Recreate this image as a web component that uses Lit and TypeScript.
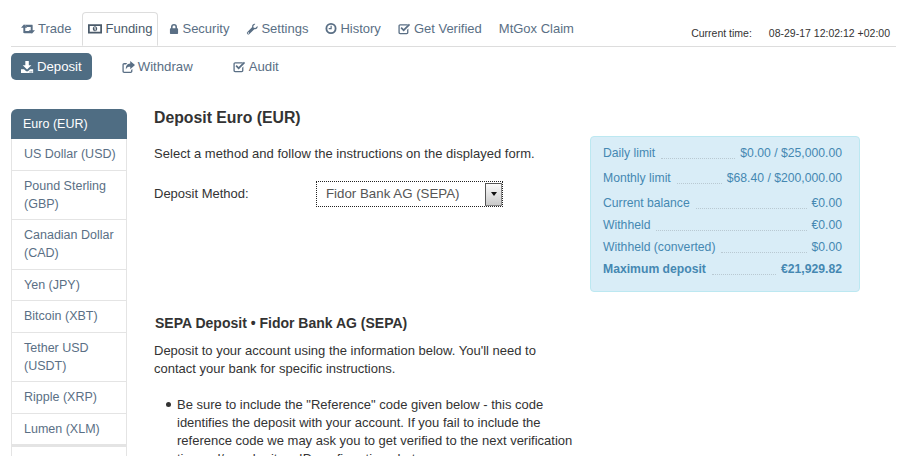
import { LitElement, html, css, svg } from 'lit';
import { customElement } from 'lit/decorators.js';

const icons: Record<string, ReturnType<typeof svg>> = {
  retweet: svg`<path d="M0 5.500L4 1l4 4.500H5.500v4H11l2.400 3H4.500C3.600 12.500 3 12 3 11V5.500H0zM5 1.500h9c.9 0 1 .5 1 1.500v5.500h3L14 13l-4-4.500h2.500v-4H7.400L5 1.500z"/>`,
  money: svg`<path fill-rule="evenodd" d="M0 1.500h16v10.500H0V1.500zm2 2v6.500h12V3.500H2zM8 3.800c1.500 0 2.500 1.200 2.500 3S9.500 9.700 8 9.700 5.500 8.500 5.500 6.800 6.500 3.800 8 3.800zM7 5.300v.8h.6v2.600h1.100V5H7.800L7 5.300z"/>`,
  lock: svg`<path fill-rule="evenodd" d="M2.800 6V4.200a4.200 4.200 0 0 1 8.400 0V6h.5c.6 0 1 .4 1 1v6c0 .6-.4 1-1 1H2.300c-.6 0-1-.4-1-1V7c0-.6.4-1 1-1h.5zm2.200 0h4V4.200a2 2 0 0 0-4 0V6z"/>`,
  wrench: svg`<path fill-rule="evenodd" d="M14.300 3.300c.4 1 .2 2.300-.6 3.100-.9.900-2.200 1.200-3.300.8L4.300 13.300a1.800 1.800 0 0 1-2.600-2.600L7.800 4.600c-.4-1.100-.1-2.400.8-3.300.9-.8 2.100-1 3.100-.6L9.100 3.300l.4 2.200 2.200.4 2.600-2.600zM3 11.200a.8.800 0 1 0 0 1.600.8.800 0 0 0 0-1.600z"/>`,
  clock: svg`<path fill-rule="evenodd" d="M6.500.5a6 6 0 1 1 0 12 6 6 0 0 1 0-12zm0 2a4 4 0 1 0 0 8 4 4 0 0 0 0-8zM6 3.500h1.300v3.800H4V6h2V3.500z"/>`,
  check: svg`<path fill-rule="evenodd" d="M2.500 1.500h9.200l-1.500 1.500H2.500c-.3 0-.5.200-.5.500v7.500c0 .3.200.5.500.5H10c.3 0 .5-.2.500-.5V8l1.500-1.500V11c0 1.100-.9 2-2 2H2.500c-1.100 0-2-.9-2-2V3.500c0-1.100.9-2 2-2zM6.500 9.800L2.900 6.200l1.400-1.400 2.200 2.200 6.100-6.100 1.400 1.400-7.500 7.500z"/>`,
  download: svg`<path fill-rule="evenodd" d="M5 0h4v5h3L7 10 2 5h3V0zM0 9.500h3.500L5.700 11.700c.7.700 1.900.7 2.600 0l2.200-2.200H14V14H0V9.500zm10.500 2.500a.7.700 0 1 0 0 1.400.7.700 0 0 0 0-1.400zm2 0a.7.700 0 1 0 0 1.400.7.700 0 0 0 0-1.400z"/>`,
  share: svg`<path fill-rule="evenodd" d="M9.500 0L15 4.700 9.500 9.500V6.800C7 6.800 5.300 7.400 4.500 10 4.200 6 6 3.300 9.500 3.100V0zM2.500 2.500H6L4.700 4H2.500c-.3 0-.5.200-.5.500V12c0 .3.200.5.500.5H10c.3 0 .5-.2.500-.5v-1.500L12 9.300V12c0 1.100-.9 2-2 2H2.500c-1.100 0-2-.9-2-2V4.500c0-1.100.9-2 2-2z"/>`,
};

const icon = (name: string, w: number, vw = 15) =>
  html`<svg class="ico" width=${w} height="14" viewBox="0 0 ${vw} 14" fill="currentColor">${icons[name]}</svg>`;

const tabs = [
  { label: 'Trade', icon: 'retweet', vw: 18, w: 14 },
  { label: 'Funding', icon: 'money', vw: 16, w: 14 },
  { label: 'Security', icon: 'lock', vw: 14, w: 10 },
  { label: 'Settings', icon: 'wrench', vw: 15, w: 12 },
  { label: 'History', icon: 'clock', vw: 13, w: 12 },
  { label: 'Get Verified', icon: 'check', vw: 15, w: 13 },
  { label: 'MtGox Claim' },
].map((t) => ({ ...t, active: t.label === 'Funding' }));

const subTabs = [
  { label: 'Deposit', icon: 'download', active: true },
  { label: 'Withdraw', icon: 'share' },
  { label: 'Audit', icon: 'check' },
];

const currencies = [
  'US Dollar (USD)',
  'Pound Sterling (GBP)',
  'Canadian Dollar (CAD)',
  'Yen (JPY)',
  'Bitcoin (XBT)',
  'Tether USD (USDT)',
  'Ripple (XRP)',
  'Lumen (XLM)',
];

const limits = [
  { label: 'Daily limit', value: '$0.00 / $25,000.00', cls: 'wide' },
  { label: 'Monthly limit', value: '$68.40 / $200,000.00', cls: 'wide' },
  { label: 'Current balance', value: '€0.00', cls: 'wide' },
  { label: 'Withheld', value: '€0.00' },
  { label: 'Withheld (converted)', value: '$0.00' },
  { label: 'Maximum deposit', value: '€21,929.82', cls: 'strong' },
];

@customElement('app-root')
export class AppRoot extends LitElement {
  static styles = css`
    * {
      margin: 0;
      padding: 0;
      box-sizing: border-box;
    }
    :host {
      display: block;
      height: 456px;
      overflow: hidden;
      background: #fff;
      font-family: 'Liberation Sans', Arial, sans-serif;
      font-size: 13px;
      line-height: 18px;
      color: #333;
    }
    .ico {
      flex: none;
    }
    .nav {
      display: flex;
      justify-content: space-between;
      align-items: flex-end;
      margin: 13px 7px 0 11px;
      height: 34px;
      border-bottom: 1px solid #ddd;
    }
    .tabs {
      display: flex;
      gap: 5px;
      margin-left: 4px;
    }
    .tab {
      display: flex;
      align-items: center;
      gap: 3px;
      height: 34px;
      padding: 0 5px;
      border: 1px solid transparent;
      color: #5a6f85;
      font-size: 13px;
    }
    .tab.on {
      color: #4a5a6a;
      background: #fff;
      border-color: #ddd #ddd #fff;
      border-radius: 4px 4px 0 0;
    }
    .clock {
      display: flex;
      gap: 17px;
      font-size: 10.5px;
      line-height: 14px;
      padding: 0 6px 6px 0;
      color: #333;
    }
    .subs {
      display: flex;
      margin: 6px 0 0 11px;
      gap: 20px;
    }
    .sub {
      display: flex;
      align-items: center;
      gap: 3px;
      height: 27px;
      padding: 0 10px;
      color: #5a6f85;
      font-size: 13.2px;
    }
    .sub.on {
      color: #fff;
      background: #4f6d83;
      border-radius: 5px;
    }
    .body {
      display: flex;
      margin: 29px 0 0 11px;
    }
    .side {
      flex: none;
      width: 116px;
      font-size: 12.5px;
      color: #5a6f85;
    }
    .side .head {
      height: 30px;
      padding: 6px 12px;
      color: #fff;
      background: #4f6d83;
      border-radius: 6px 6px 0 0;
    }
    .side .item {
      padding: 6.25px 6px 6.25px 12px;
      border: 1px solid #e4e4e4;
      border-top: 0;
    }
    .side .rest {
      height: 20px;
      border: 1px solid #e4e4e4;
      border-top: 2px solid #e4e4e4;
    }
    .main {
      flex: none;
      width: 436px;
      margin-left: 27px;
    }
    h1 {
      font-size: 15.8px;
      line-height: 18px;
      color: #333;
    }
    .lead {
      margin-top: 18px;
      width: 420px;
      letter-spacing: 0.03px;
    }
    .field {
      display: flex;
      align-items: center;
      margin-top: 18px;
    }
    .field label {
      width: 162px;
    }
    .select {
      display: flex;
      align-items: center;
      justify-content: space-between;
      width: 187px;
      height: 26px;
      padding: 0 0 0 9px;
      border: 1px dotted #222;
      color: #555;
      font-size: 13.3px;
    }
    .arrow {
      display: flex;
      align-items: center;
      justify-content: center;
      width: 17px;
      height: 23px;
      border: 1px solid #555;
      border-right-color: #888;
      border-bottom-color: #888;
      background: linear-gradient(#fafafa, #cacaca);
    }
    .arrow i {
      border: 3.5px solid transparent;
      border-top: 4px solid #111;
      border-bottom: 0;
    }
    h2 {
      margin: 107px 0 0 1px;
      font-size: 14px;
      line-height: 18px;
      color: #333;
    }
    .intro {
      margin-top: 10px;
      width: 400px;
    }
    ul {
      margin: 18px 0 0 23px;
      width: 398px;
      list-style: none;
    }
    li::before {
      content: '';
      display: inline-block;
      width: 5px;
      height: 5px;
      margin: 0 6px 2px -11px;
      border-radius: 50%;
      background: #333;
      vertical-align: middle;
    }
    .panel {
      flex: none;
      align-self: flex-start;
      width: 270px;
      height: 156px;
      margin: 27px 0 0 0;
      padding: 0 17px 0 12px;
      background: #d9edf7;
      border: 1px solid #bce8f1;
      border-radius: 4px;
      color: #4588b2;
      font-size: 12.2px;
    }
    .row {
      display: flex;
      align-items: flex-end;
      height: 22px;
      line-height: 18px;
    }
    .row.wide {
      height: 25px;
    }
    .row.strong {
      font-weight: bold;
    }
    .row .dots {
      flex: 1;
      margin: 0 5px 3px 6px;
      border-bottom: 1px dotted #b9c9d2;
    }
  `;

  render() {
    return html`
      <div class="nav">
        <div class="tabs">
          ${tabs.map(
            (t) => html`<div class="tab ${t.active ? 'on' : ''}">
              ${t.icon ? icon(t.icon, t.w!, t.vw) : ''}<span>${t.label}</span>
            </div>`,
          )}
        </div>
        <div class="clock"><span>Current time:</span><span>08-29-17 12:02:12 +02:00</span></div>
      </div>
      <div class="subs">
        ${subTabs.map(
          (t) => html`<div class="sub ${t.active ? 'on' : ''}">${icon(t.icon, 13)}<span>${t.label}</span></div>`,
        )}
      </div>
      <div class="body">
        <div class="side">
          <div class="head">Euro (EUR)</div>
          ${currencies.map((c) => html`<div class="item">${c}</div>`)}
          <div class="rest"></div>
        </div>
        <div class="main">
          <h1>Deposit Euro (EUR)</h1>
          <p class="lead">Select a method and follow the instructions on the displayed form.</p>
          <div class="field">
            <label>Deposit Method:</label>
            <div class="select">
              <span>Fidor Bank AG (SEPA)</span>
              <div class="arrow"><i></i></div>
            </div>
          </div>
          <h2>SEPA Deposit • Fidor Bank AG (SEPA)</h2>
          <p class="intro">
            Deposit to your account using the information below. You'll need to contact your bank for specific
            instructions.
          </p>
          <ul>
            <li>Be sure to include the "Reference" code given below - this code identifies the deposit with your
              account. If you fail to include the reference code we may ask you to get verified to the next
              verification tier and/or submit an ID confirmation photo.</li>
          </ul>
        </div>
        <div class="panel">
          ${limits.map(
            (l) => html`<div class="row ${l.cls ?? ''}">
              <span>${l.label}</span><span class="dots"></span><span>${l.value}</span>
            </div>`,
          )}
        </div>
      </div>
    `;
  }
}
